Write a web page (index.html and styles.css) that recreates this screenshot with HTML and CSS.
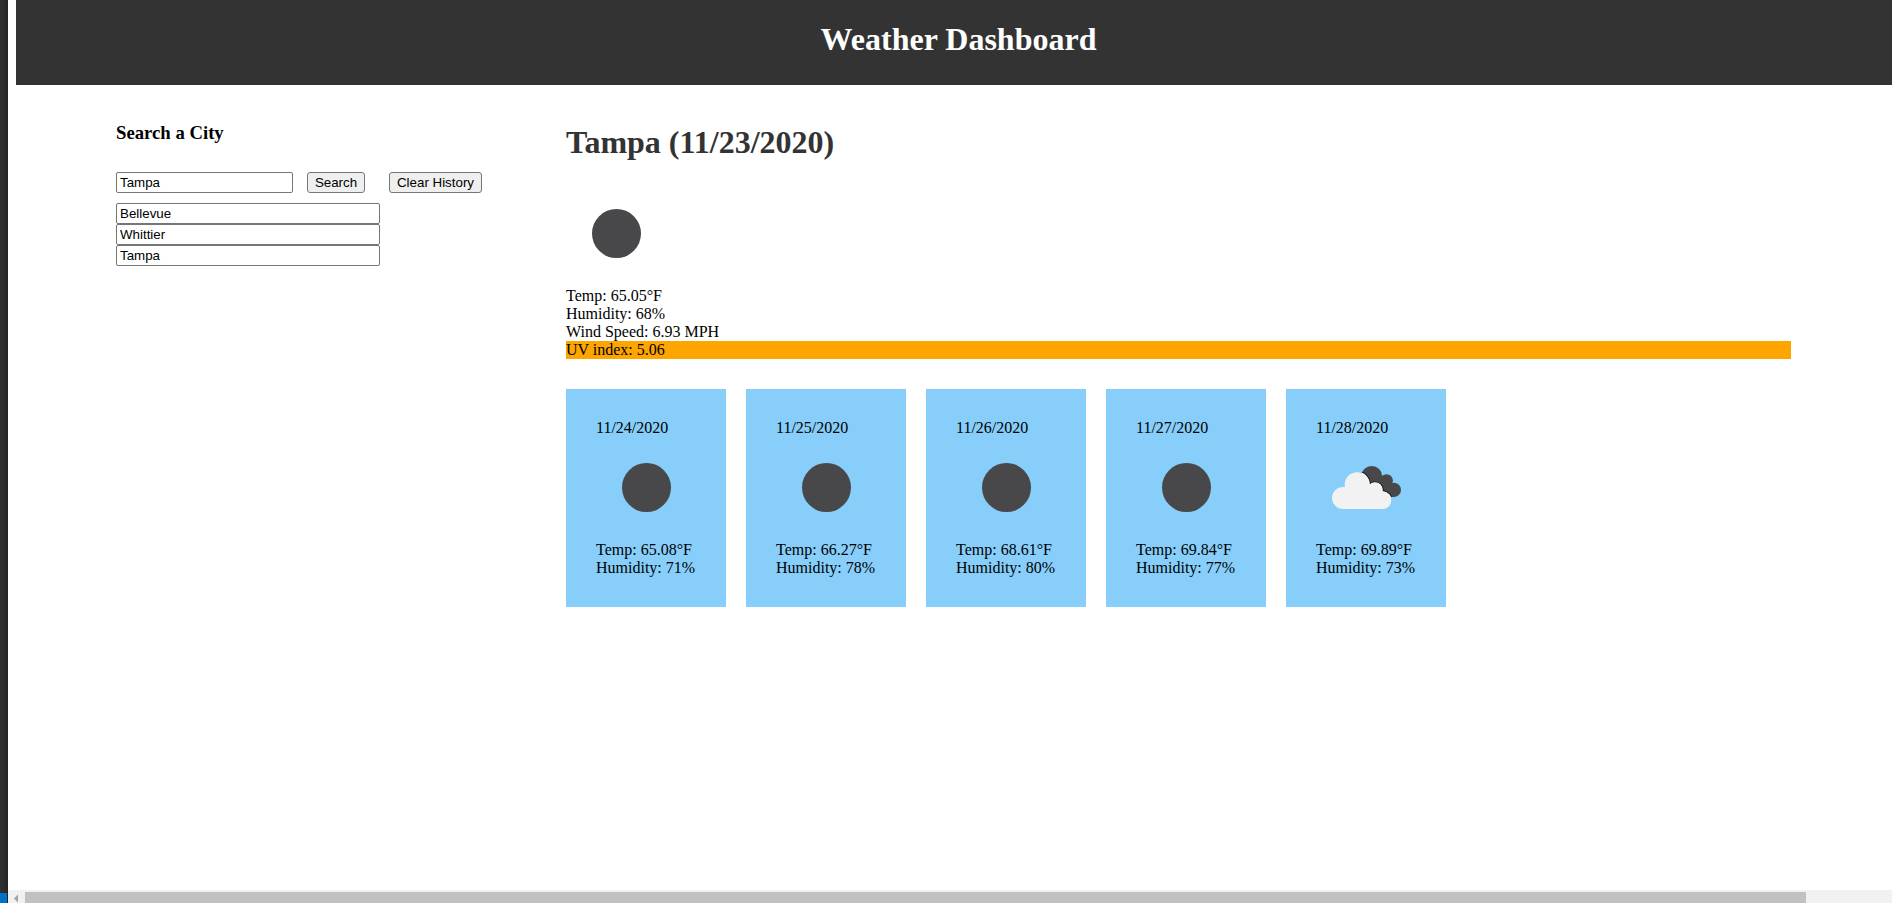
FILE: index.html
```html
<!DOCTYPE html>
<html lang="en">
<head>
<meta charset="utf-8">
<title>Weather Dashboard</title>
<link rel="stylesheet" href="styles.css">
</head>
<body>
<div class="edge"><div class="edge-accent"></div></div>
<div class="window">
  <div class="page">
    <header class="header"><h1>Weather Dashboard</h1></header>
    <main class="main">
      <aside class="search">
        <h3>Search a City</h3>
        <div class="search-row">
          <input class="field city" type="text" value="Tampa">
          <button class="btn btn-search">Search</button>
          <button class="btn btn-clear">Clear History</button>
        </div>
        <div class="history">
          <input class="field" type="text" value="Bellevue">
          <input class="field" type="text" value="Whittier">
          <input class="field" type="text" value="Tampa">
        </div>
      </aside>
      <section class="weather">
        <h1 class="city-name">Tampa (11/23/2020)</h1>
        <svg class="icon" viewBox="0 0 100 100"><circle cx="50.5" cy="50.5" r="24.5" fill="#48484a"/></svg>
        <div>Temp: 65.05°F</div>
        <div>Humidity: 68%</div>
        <div>Wind Speed: 6.93 MPH</div>
        <div class="uv">UV index: 5.06</div>
        <div class="forecast">
          <div class="card"><div>11/24/2020</div><svg class="icon" viewBox="0 0 100 100"><circle cx="50.5" cy="50.5" r="24.5" fill="#48484a"/></svg><div>Temp: 65.08°F</div><div>Humidity: 71%</div></div>
          <div class="card"><div>11/25/2020</div><svg class="icon" viewBox="0 0 100 100"><circle cx="50.5" cy="50.5" r="24.5" fill="#48484a"/></svg><div>Temp: 66.27°F</div><div>Humidity: 78%</div></div>
          <div class="card"><div>11/26/2020</div><svg class="icon" viewBox="0 0 100 100"><circle cx="50.5" cy="50.5" r="24.5" fill="#48484a"/></svg><div>Temp: 68.61°F</div><div>Humidity: 80%</div></div>
          <div class="card"><div>11/27/2020</div><svg class="icon" viewBox="0 0 100 100"><circle cx="50.5" cy="50.5" r="24.5" fill="#48484a"/></svg><div>Temp: 69.84°F</div><div>Humidity: 77%</div></div>
          <div class="card"><div>11/28/2020</div><svg class="icon" viewBox="0 0 100 100">
            <clipPath id="overlap"><circle cx="55.7" cy="39.5" r="10.5"/><circle cx="70.5" cy="43.6" r="6.4"/><circle cx="77.8" cy="52.9" r="7.2"/><path d="M55 38L71 42L78 60H70L56 50Z"/></clipPath>
            <g fill="#48484a"><circle cx="55.7" cy="39.5" r="10.5"/><circle cx="70.5" cy="43.6" r="6.4"/><circle cx="77.8" cy="52.9" r="7.2"/><path d="M55 38L71 42L78 60H70L56 50Z"/></g>
            <g clip-path="url(#overlap)">
              <g fill="#1c1c1e"><circle cx="41" cy="47.5" r="13.8"/><circle cx="59" cy="53" r="8.8"/><circle cx="66.6" cy="63.3" r="10"/></g>
              <g fill="#fff"><circle cx="41" cy="47.5" r="12.8"/><circle cx="59" cy="53" r="7.8"/><circle cx="66.6" cy="63.3" r="9"/></g>
            </g>
            <g fill="#f2f2f2"><circle cx="27" cy="61" r="11"/><circle cx="41" cy="47.5" r="12.3"/><circle cx="59" cy="53" r="7.2"/><circle cx="66.6" cy="63.3" r="8.7"/><path d="M27 50H47L60 50L66 56V72H27Z"/></g>
          </svg><div>Temp: 69.89°F</div><div>Humidity: 73%</div></div>
        </div>
      </section>
    </main>
  </div>
  <div class="scrollbar">
    <svg class="arrow" viewBox="0 0 17 13"><path d="M6 8.5L10 4.5V12.5Z" fill="#a3a3a3"/></svg>
    <div class="thumb"></div>
  </div>
</div>
</body>
</html>
```
FILE: styles.css
```css
* { box-sizing: border-box; }
body {
  margin: 0;
  height: 903px;
  display: flex;
  overflow: hidden;
  background: #fff;
  color: #000;
  font: 16px/18px "Liberation Serif", "Times New Roman", serif;
}
.edge {
  width: 8px;
  flex: none;
  display: flex;
  flex-direction: column;
  justify-content: flex-end;
  background: linear-gradient(90deg, #303030 0, #2b2b2b 60%, #222 100%);
}
.edge-accent { width: 7px; height: 10px; background: #0173c7; }
.window { flex: 1; display: flex; flex-direction: column; }
.page { flex: 1; padding-left: 8px; }
.header { height: 85px; padding-top: 21px; background: #333; color: #fff; text-align: center; }
h1 { margin: 0; font-size: 32px; line-height: 37px; }
.header h1 { padding-left: 9px; }
.main { display: flex; padding: 37px 101px 0 100px; }
.search { width: 450px; flex: none; }
h3 { margin: 0 0 29px; font-size: 18.72px; line-height: 21px; }
.search-row { display: flex; margin-bottom: 10px; }
.field {
  display: block;
  width: 264px;
  height: 21px;
  margin: 0;
  padding: 1px 3px;
  border: 1px solid #767676;
  border-radius: 2px;
  background: #fff;
  color: #000;
  font: 13.333px "Liberation Sans", Arial, sans-serif;
}
.city { width: 177px; }
.btn {
  height: 21px;
  margin: 0;
  padding: 0;
  border: 1px solid #767676;
  border-radius: 3px;
  background: #efefef;
  color: #000;
  font: 13.333px "Liberation Sans", Arial, sans-serif;
}
.btn-search { width: 58px; margin-left: 14px; }
.btn-clear { width: 93px; margin-left: 24px; }
.weather { flex: 1; padding-top: 2px; }
.city-name { margin-bottom: 22px; color: #333; }
.icon { display: block; width: 100px; height: 100px; margin-bottom: 4px; }
.uv { background: #ffa500; }
.forecast { display: flex; gap: 20px; margin-top: 30px; }
.card { width: 160px; height: 218px; padding: 30px; background: #87cefa; }
.scrollbar { height: 13px; display: flex; background: #f1f1f1; }
.arrow { width: 17px; height: 13px; }
.thumb { width: 1781px; margin-top: 2px; background: #c1c1c1; }
```
